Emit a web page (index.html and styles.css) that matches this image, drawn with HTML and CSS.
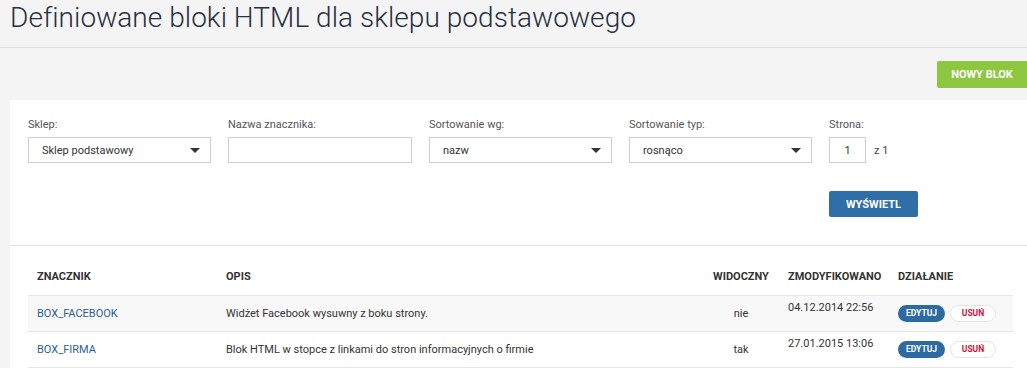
FILE: index.html
```html
<!DOCTYPE html>
<html lang="pl">
<head>
<meta charset="utf-8">
<title>Definiowane bloki HTML</title>
<link rel="stylesheet" href="styles.css">
</head>
<body>
<div class="page-head">
  <h1 class="page-title">Definiowane bloki HTML dla sklepu podstawowego</h1>
</div>
<div class="toolbar">
  <a class="btn btn-green" href="#">NOWY BLOK</a>
</div>
<div class="panel">
  <form class="filters">
    <div class="field">
      <label class="field-label">Sklep:</label>
      <div class="select w183"><span>Sklep podstawowy</span><i class="caret"></i></div>
    </div>
    <div class="field">
      <label class="field-label">Nazwa znacznika:</label>
      <div class="input w184"></div>
    </div>
    <div class="field">
      <label class="field-label">Sortowanie wg:</label>
      <div class="select w183"><span>nazw</span><i class="caret"></i></div>
    </div>
    <div class="field">
      <label class="field-label">Sortowanie typ:</label>
      <div class="select w183"><span>rosnąco</span><i class="caret"></i></div>
    </div>
    <div class="field">
      <label class="field-label">Strona:</label>
      <div class="page-box"><div class="input page-input">1</div><span class="page-of">z 1</span></div>
    </div>
    <div class="submit-cell">
      <a class="btn btn-blue" href="#">WYŚWIETL</a>
    </div>
  </form>
  <div class="table-wrap">
    <table class="grid">
      <colgroup>
        <col class="c1"><col class="c2"><col class="c3"><col class="c4"><col class="c5">
      </colgroup>
      <thead>
        <tr>
          <th>ZNACZNIK</th>
          <th>OPIS</th>
          <th class="center">WIDOCZNY</th>
          <th>ZMODYFIKOWANO</th>
          <th>DZIAŁANIE</th>
        </tr>
      </thead>
      <tbody>
        <tr class="odd">
          <td><a class="link" href="#">BOX_FACEBOOK</a></td>
          <td>Widżet Facebook wysuwny z boku strony.</td>
          <td class="center">nie</td>
          <td class="date">04.12.2014 22:56</td>
          <td><span class="pill pill-edit">EDYTUJ</span><span class="pill pill-del">USUŃ</span></td>
        </tr>
        <tr>
          <td><a class="link" href="#">BOX_FIRMA</a></td>
          <td>Blok HTML w stopce z linkami do stron informacyjnych o firmie</td>
          <td class="center">tak</td>
          <td class="date">27.01.2015 13:06</td>
          <td><span class="pill pill-edit">EDYTUJ</span><span class="pill pill-del">USUŃ</span></td>
        </tr>
      </tbody>
    </table>
  </div>
</div>
</body>
</html>
```
FILE: styles.css
```css
* { box-sizing: border-box; }
html, body {
  margin: 0;
  padding: 0;
  background: #f4f4f4;
  font-family: Roboto, "Liberation Sans", sans-serif;
  color: #333;
  overflow: hidden;
}
.page-head {
  height: 48px;
  border-bottom: 1px solid #dcdcdc;
  padding: 0 10px;
}
.page-title {
  margin: 0;
  padding-top: 1px;
  font-size: 28px;
  line-height: 34px;
  font-weight: 300;
  color: #28303f;
  letter-spacing: 0.05px;
}
.toolbar {
  height: 52px;
  display: flex;
  justify-content: flex-end;
  align-items: flex-start;
  padding-top: 13px;
}
.btn {
  display: inline-flex;
  align-items: center;
  justify-content: center;
  color: #fff;
  text-decoration: none;
  font-size: 11px;
  font-weight: 700;
  border-radius: 2px;
}
.btn-green {
  width: 90px;
  height: 27px;
  background: #8dc63f;
  border-radius: 2px 0 0 2px;
}
.btn-blue {
  width: 89px;
  height: 26px;
  background: #2f6ea6;
}
.panel {
  margin-left: 10px;
  background: #fff;
  min-height: 268px;
}
.filters {
  display: grid;
  grid-template-columns: 183px 184px 183px 183px auto;
  column-gap: 17px;
  padding: 18px 18px 28px;
  border-bottom: 1px solid #dedede;
}
.field-label {
  display: block;
  font-size: 11px;
  line-height: 14px;
  color: #555;
  margin-bottom: 5px;
}
.select, .input {
  height: 26px;
  border: 1px solid #cfcfcf;
  background: #fff;
  font-size: 11px;
  color: #333;
}
.select {
  display: flex;
  align-items: center;
  justify-content: space-between;
  padding: 0 10px 0 13px;
}
.w183 { width: 183px; }
.w184 { width: 184px; }
.caret {
  width: 0;
  height: 0;
  border-left: 5px solid transparent;
  border-right: 5px solid transparent;
  border-top: 5px solid #333;
}
.page-box {
  display: flex;
  align-items: center;
}
.page-input {
  width: 37px;
  display: flex;
  align-items: center;
  justify-content: center;
  font-size: 11px;
}
.page-of {
  font-size: 11px;
  margin-left: 8px;
  color: #444;
}
.submit-cell {
  grid-column: 5;
  margin-top: 28px;
}
.table-wrap {
  padding: 13px 14px 0 18px;
}
.grid {
  width: 985px;
  table-layout: fixed;
  border-collapse: collapse;
  font-size: 11px;
}
.c1 { width: 189px; }
.c2 { width: 486px; }
.c3 { width: 76px; }
.c4 { width: 110px; }
.c5 { width: 124px; }
.grid th {
  height: 36px;
  text-align: left;
  font-weight: 700;
  color: #333;
  padding: 0 9px;
  border-bottom: 1px solid #e6e6e6;
  white-space: nowrap;
}
.grid td {
  height: 36px;
  padding: 0 9px;
  border-bottom: 1px solid #e6e6e6;
  vertical-align: middle;
  color: #333;
  white-space: nowrap;
}
.grid .center { text-align: center; }
.grid td.date {
  vertical-align: top;
  padding-top: 5px;
}
.odd td { background: #f8f8f8; }
.link {
  color: #2f5f96;
  text-decoration: none;
}
.pill {
  display: inline-flex;
  align-items: center;
  justify-content: center;
  height: 17px;
  border-radius: 9px;
  font-size: 8.5px;
  font-weight: 700;
  vertical-align: middle;
}
.pill-edit {
  width: 47px;
  background: #2c6aa0;
  color: #fff;
}
.pill-del {
  width: 46px;
  margin-left: 5px;
  background: #fff;
  border: 1px solid #e4e4e4;
  color: #d2143c;
}
```
